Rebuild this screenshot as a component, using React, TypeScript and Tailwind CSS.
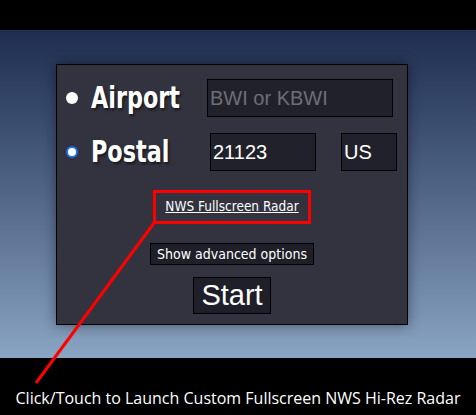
const din = { fontFamily: '"Liberation Sans Narrow", "DejaVu Sans Condensed", sans-serif' };
const arial = { fontFamily: '"Liberation Sans", Arial, sans-serif' };

function Radio({ checked }: { checked?: boolean }) {
  if (checked) {
    return <span className="block w-[12px] h-[12px] rounded-full border-[2px] border-[#1a73e8] bg-white" />;
  }
  return <span className="block w-[12px] h-[12px] rounded-full bg-white" />;
}

function Label({ text, width }: { text: string; width: string }) {
  return (
    <span className={`${width} block`}>
      <span
        className="inline-block origin-left scale-x-[0.8] text-white font-bold text-[31px] leading-none [text-shadow:2px_2px_3px_rgba(0,0,0,0.55)]"
        style={din}
      >
        {text}
      </span>
    </span>
  );
}

export default function App() {
  return (
    <div className="relative w-[476px] h-[415px] overflow-hidden flex flex-col bg-black">
      <div className="h-[30px] bg-black" />

      <div className="h-[328px] bg-gradient-to-b from-[#1f2e50] to-[#8aa4c3] pt-[34px] pl-[56px]">
        <div className="w-[352px] h-[261px] bg-[#33323f] border border-black shadow-[0_0_12px_rgba(0,0,0,0.45)] pt-[14px]">
          {/* airport row */}
          <div className="flex items-center h-[38px]">
            <div className="ml-[9px] w-[25px]"><Radio /></div>
            <Label text="Airport" width="w-[116px]" />
            <input
              placeholder="BWI or KBWI"
              className="w-[186px] h-[38px] bg-[#21212b] border border-black px-[2px] text-[20px] text-white placeholder:text-[#6e6e75] outline-none"
              style={arial}
            />
          </div>

          {/* postal row */}
          <div className="flex items-center h-[38px] mt-[16px]">
            <div className="ml-[9px] w-[25px]"><Radio checked /></div>
            <Label text="Postal" width="w-[119px]" />
            <input
              defaultValue="21123"
              className="w-[106px] h-[38px] bg-[#21212b] border border-black px-[2px] text-[20px] text-white outline-none"
              style={arial}
            />
            <input
              defaultValue="US"
              className="ml-[25px] w-[56px] h-[38px] bg-[#21212b] border border-black px-[2px] text-[20px] text-white outline-none"
              style={arial}
            />
          </div>

          {/* link + buttons */}
          <div className="flex flex-col items-center mt-[19px]">
            <div className="w-[158px] h-[34px] border-[3px] border-[#ff0000] flex items-center justify-center">
              <a href="#" className="text-white underline whitespace-nowrap text-[13.5px] leading-none" style={din}>
                NWS Fullscreen Radar
              </a>
            </div>

            <button
              className="mt-[19px] h-[22px] px-[6px] bg-[#1f1f29] border border-black text-white whitespace-nowrap text-[14px] leading-none"
              style={din}
            >
              Show advanced options
            </button>

            <button
              className="mt-[12px] w-[78px] h-[37px] bg-[#1f1f29] border border-black text-white text-[29px] leading-none"
              style={arial}
            >
              Start
            </button>
          </div>
        </div>
      </div>

      <div className="flex-1 bg-black flex items-center justify-center pt-[22px]">
        <span className="text-white text-[16px] whitespace-nowrap" style={{ fontFamily: '"Open Sans", "Noto Sans", sans-serif' }}>
          Click/Touch to Launch Custom Fullscreen NWS Hi-Rez Radar
        </span>
      </div>

      <svg className="absolute left-0 top-0 pointer-events-none" width="476" height="415">
        <line x1="154" y1="223" x2="36" y2="383" stroke="#ff0000" strokeWidth="3" />
      </svg>
    </div>
  );
}
